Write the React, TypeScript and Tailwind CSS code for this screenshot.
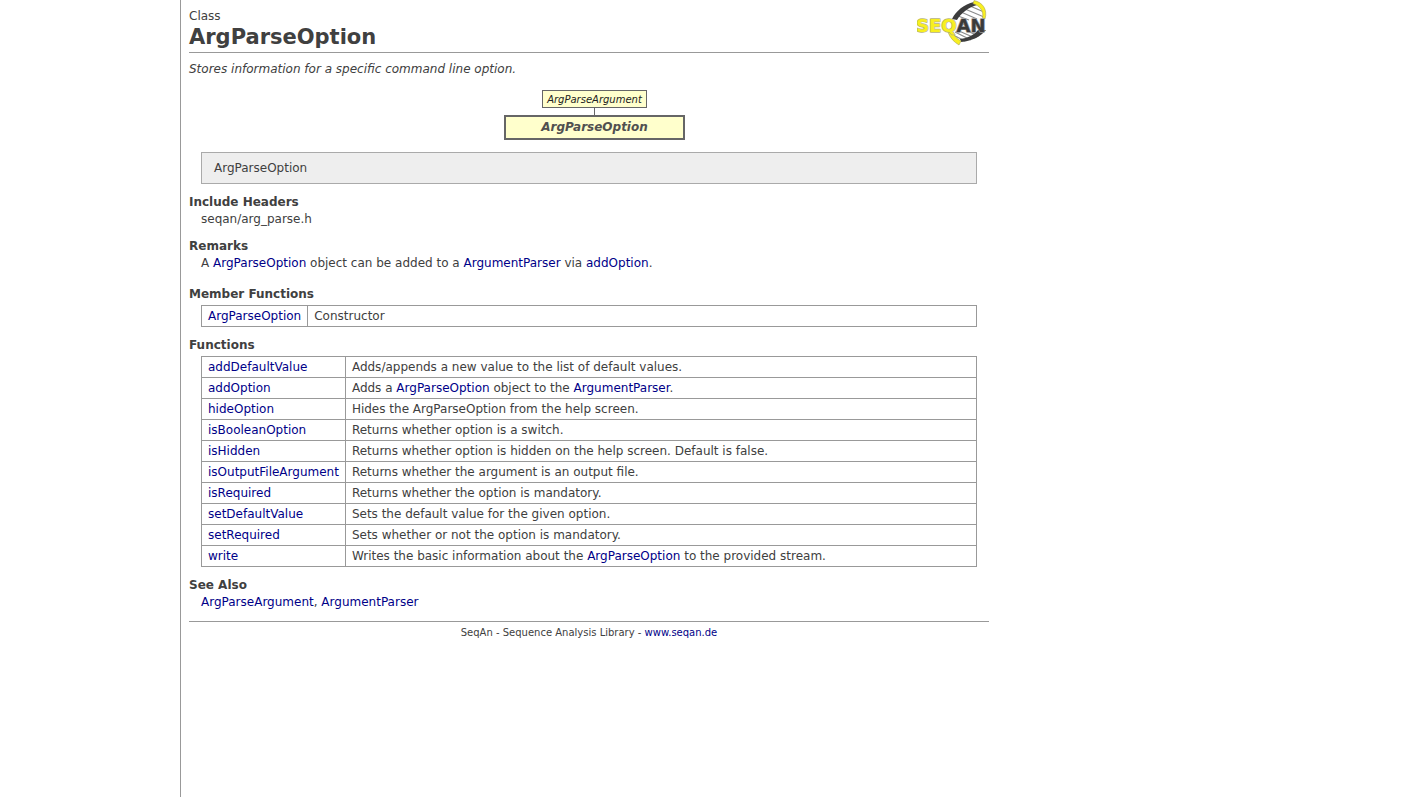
import type { ReactNode } from "react";

function Ref({ children, href }: { children: ReactNode; href?: string }) {
  return (
    <a href={href ?? `#${children}`} className="text-[#000088] hover:underline">
      {children}
    </a>
  );
}

function Logo() {
  return (
    <svg viewBox="0 0 72 48" className="h-12 w-[72px]" role="img" aria-label="SeqAn">
      <path
        d="M53 6 67 12M48 9 67 17M44 12 60 19M41 16 52 20M38 32 54 40M42 31 58 38M50 31 62 36M36 35 48 41"
        stroke="#8c8c8c"
        strokeWidth="1.2"
      />
      <path d="M35 19C39 11 47 4 57 2L60 5C52 7 44 13 40 20Z" fill="#3c3c3c" />
      <path d="M69 30C64 36 56 41 44 42L43 39C51 38 57 35 61 30Z" fill="#3c3c3c" />
      <path
        d="M57 .6C65 2 71 9 68 19L65.500 18C67 11 63 6 56 3.500Z"
        fill="#f8ef20"
        stroke="#a9a55a"
        strokeWidth=".6"
      />
      <path
        d="M31 32C33 38 37 42 42 45L44 41C40 39 37 36 36 32Z"
        fill="#f8ef20"
        stroke="#a9a55a"
        strokeWidth=".6"
      />
      <text
        x="-1"
        y="32"
        fontFamily="DejaVu Sans, Verdana, sans-serif"
        fontWeight="700"
        fontSize="18"
        paintOrder="stroke"
        strokeWidth="1.400"
        strokeLinejoin="round"
      >
        <tspan fill="#f8ef20" stroke="#b5b17a">SEQ</tspan>
        <tspan fill="#3a3a3a" stroke="#9a9a9a">AN</tspan>
      </text>
    </svg>
  );
}

function Section({ title, children }: { title: string; children: ReactNode }) {
  return (
    <section>
      <h2 className="font-bold">{title}</h2>
      <div className="mx-3">{children}</div>
    </section>
  );
}

function MemberTable({ rows }: { rows: [string, ReactNode][] }) {
  return (
    <table className="mt-0.5 w-full border-collapse">
      <tbody>
        {rows.map(([name, text]) => (
          <tr key={name} className="h-[21px]">
            <th scope="row" className="w-px border border-[#999999] px-1.5 text-left font-normal whitespace-nowrap">
              <Ref>{name}</Ref>
            </th>
            <td className="border border-[#999999] px-1.5">{text}</td>
          </tr>
        ))}
      </tbody>
    </table>
  );
}

const memberFunctions: [string, ReactNode][] = [["ArgParseOption", "Constructor"]];

const functions: [string, ReactNode][] = [
  ["addDefaultValue", "Adds/appends a new value to the list of default values."],
  ["addOption", <>Adds a <Ref>ArgParseOption</Ref> object to the <Ref>ArgumentParser</Ref>.</>],
  ["hideOption", "Hides the ArgParseOption from the help screen."],
  ["isBooleanOption", "Returns whether option is a switch."],
  ["isHidden", "Returns whether option is hidden on the help screen. Default is false."],
  ["isOutputFileArgument", "Returns whether the argument is an output file."],
  ["isRequired", "Returns whether the option is mandatory."],
  ["setDefaultValue", "Sets the default value for the given option."],
  ["setRequired", "Sets whether or not the option is mandatory."],
  ["write", <>Writes the basic information about the <Ref>ArgParseOption</Ref> to the provided stream.</>],
];

export default function App() {
  return (
    <div className="ml-[180px] min-h-screen border-l border-[#999999] bg-white pl-2 font-['Verdana','DejaVu_Sans',sans-serif] text-[12px] leading-[17px] text-[#404040]">
      <main className="max-w-[800px]">
        <header className="flex items-start justify-between border-b border-[#999999] pb-[3px]">
          <div className="pt-2">
            <p>Class</p>
            <h1 className="text-[21px] leading-6 font-bold">ArgParseOption</h1>
          </div>
          <a href="#seqan">
            <Logo />
          </a>
        </header>

        <p className="mt-2 italic">Stores information for a specific command line option.</p>

        <div className="mt-3 ml-[11px] flex flex-col items-center italic">
          <a
            href="#ArgParseArgument"
            className="flex h-[18px] w-[105px] items-center justify-center border border-[#666666] bg-[#ffffcc] text-[10px] text-[#222222]"
          >
            ArgParseArgument
          </a>
          <div className="h-[7px] w-px bg-[#666666]" />
          <div className="flex h-[25px] w-[181px] items-center justify-center border-2 border-[#666666] bg-[#ffffcc] font-bold text-[#505050]">
            ArgParseOption
          </div>
        </div>

        <div className="mx-3 mt-3 mb-[10px] border border-[#aaaaaa] bg-[#eeeeee] px-3 py-[7px] leading-4">
          ArgParseOption
        </div>

        <div className="flex flex-col gap-[10px]">
          <Section title="Include Headers">seqan/arg_parse.h</Section>
          <Section title="Remarks">
            <p className="mb-1">
              A <Ref>ArgParseOption</Ref> object can be added to a <Ref>ArgumentParser</Ref> via <Ref>addOption</Ref>.
            </p>
          </Section>
          <Section title="Member Functions">
            <MemberTable rows={memberFunctions} />
          </Section>
          <Section title="Functions">
            <MemberTable rows={functions} />
          </Section>
          <Section title="See Also">
            <Ref>ArgParseArgument</Ref>, <Ref>ArgumentParser</Ref>
          </Section>
        </div>

        <footer className="mt-[10px] border-t border-[#999999] pt-0.5 text-center text-[10px]">
          SeqAn - Sequence Analysis Library - <Ref href="#www.seqan.de">www.seqan.de</Ref>
        </footer>
      </main>
    </div>
  );
}
